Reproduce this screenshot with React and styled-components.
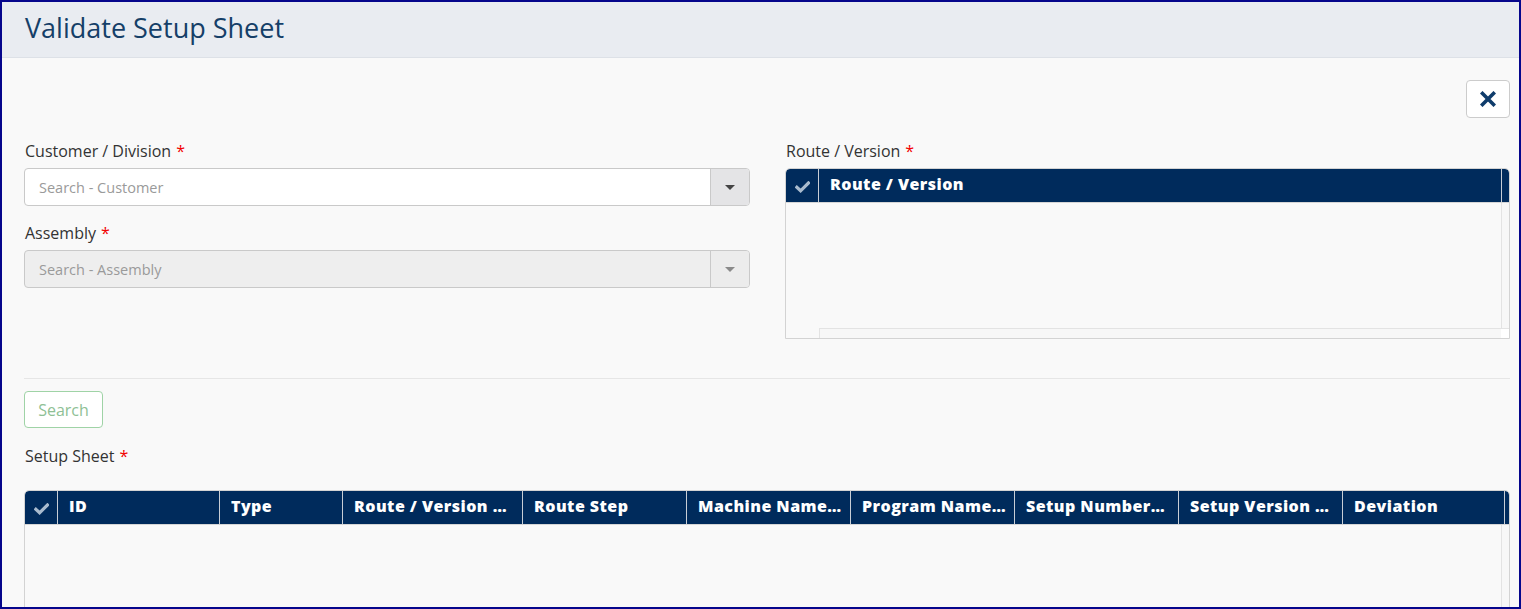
import React from "react";
import styled, { createGlobalStyle } from "styled-components";

const GlobalStyle = createGlobalStyle`
  * { box-sizing: border-box; }
  html, body { margin: 0; padding: 0; }
  body {
    font-family: "Open Sans", "Liberation Sans", sans-serif;
    background: #f9f9f9;
  }
`;

const Frame = styled.div`
  height: 609px;
  border: 2px solid #06068c;
  background: #f9f9f9;
  overflow: hidden;
  display: flex;
  flex-direction: column;
`;

const Header = styled.header`
  height: 56px;
  flex: none;
  background: #e9ecf1;
  border-bottom: 1px solid #dde1e7;
  display: flex;
  align-items: center;
  padding: 0 0 4px 23px;
`;

const Title = styled.h1`
  margin: 0;
  font-size: 27px;
  font-weight: 400;
  color: #153f68;
`;

const Body = styled.main`
  padding: 22px 9px 0 22px;
  display: flex;
  flex-direction: column;
`;

const CloseRow = styled.div`
  display: flex;
  justify-content: flex-end;
`;

const CloseButton = styled.button`
  width: 44px;
  height: 38px;
  background: #fff;
  border: 1px solid #ccc;
  border-radius: 4px;
  display: flex;
  align-items: center;
  justify-content: center;
  padding: 0;
`;

const FormGrid = styled.div`
  display: grid;
  grid-template-columns: 726px 1fr;
  column-gap: 35px;
  margin-top: 23px;
`;

const Column = styled.div`
  display: flex;
  flex-direction: column;
`;

const Label = styled.label`
  font-size: 16px;
  line-height: 21px;
  color: #333;
  margin-top: ${(p) => p.$top || 0}px;
  margin-bottom: 6px;
  margin-left: 1px;
`;

const Req = styled.span`
  color: #f20000;
  margin-left: 5px;
`;

const Select = styled.div`
  display: flex;
  height: 38px;
  border: 1px solid #c9c9c9;
  border-radius: 4px;
  background: ${(p) => (p.$disabled ? "#eeeeee" : "#fff")};
  overflow: hidden;
`;

const SelectInput = styled.div`
  flex: 1;
  display: flex;
  align-items: center;
  padding-left: 14px;
  font-size: 14.5px;
  color: #9a9a9a;
`;

const SelectAddon = styled.div`
  width: 39px;
  border-left: 1px solid #c9c9c9;
  background: ${(p) => (p.$disabled ? "#ececec" : "#e4e4e6")};
  display: flex;
  align-items: center;
  justify-content: center;
`;

const Caret = styled.span`
  width: 0;
  height: 0;
  border-left: 5px solid transparent;
  border-right: 5px solid transparent;
  border-top: 5px solid ${(p) => (p.$disabled ? "#8a8a8a" : "#444")};
`;

const Grid = styled.div`
  border: 1px solid #d3d3d3;
  border-radius: 5px 5px 0 0;
  height: ${(p) => p.$height}px;
  display: flex;
  flex-direction: column;
  overflow: hidden;
`;

const HeadRow = styled.div`
  display: flex;
  height: 34px;
  flex: none;
  background: #002b5c;
  border-radius: 4px 4px 0 0;
  border-bottom: 1px solid #d6d6d6;
`;

const HeadCell = styled.div`
  width: ${(p) => (p.$w ? `${p.$w}px` : "auto")};
  flex: ${(p) => (p.$w ? "none" : 1)};
  border-right: 1px solid #c8ced6;
  color: #fff;
  font-weight: 800;
  font-size: 16px;
  letter-spacing: 0.45px;
  padding: 0 8px 4px 11px;
  display: flex;
  align-items: center;
  white-space: nowrap;
  overflow: hidden;
  & > span {
    overflow: hidden;
    text-overflow: ellipsis;
  }
`;

const CheckCell = styled.div`
  width: 33px;
  flex: none;
  border-right: 1px solid #c8ced6;
  display: flex;
  align-items: center;
  justify-content: center;
  padding-top: 2px;
`;

const HeadSpacer = styled.div`
  flex: 1;
`;

const GridBody = styled.div`
  flex: 1;
  display: flex;
  flex-direction: column;
  background: #f9f9f9;
`;

const BodyMain = styled.div`
  flex: 1;
  display: flex;
`;

const Viewport = styled.div`
  flex: 1;
`;

const VScroll = styled.div`
  width: 8px;
  border-left: 1px solid #e3e3e3;
  background: #f7f7f7;
`;

const HScrollRow = styled.div`
  height: 10px;
  display: flex;
  flex: none;
`;

const HScrollGap = styled.div`
  width: 33px;
`;

const HScroll = styled.div`
  flex: 1;
  border-top: 1px solid #e3e3e3;
  border-left: 1px solid #e3e3e3;
  background: #f7f7f7;
`;

const ScrollCorner = styled.div`
  width: 8px;
  background: #fff;
  border-top: 1px solid #e3e3e3;
`;

const Divider = styled.hr`
  border: none;
  border-top: 1px solid #e6e6e6;
  margin: 39px 0 12px 0;
`;

const SearchButton = styled.button`
  align-self: flex-start;
  width: 79px;
  height: 37px;
  background: #fff;
  border: 1px solid #9fd3a6;
  border-radius: 4px;
  font-family: inherit;
  font-size: 16px;
  color: #8ebf95;
  padding: 0;
`;

const SectionLabel = styled(Label)`
  margin-top: 18px;
  margin-bottom: 23px;
`;

const Check = ({ color = "#a9bbce" }) => (
  <svg width="15" height="12" viewBox="0 0 15 12">
    <path d="M1.8 6.3 L5.6 9.8 L13.4 2" fill="none" stroke={color} strokeWidth="3.2" strokeLinecap="square" />
  </svg>
);

const CloseIcon = () => (
  <svg width="16" height="16" viewBox="0 0 16 16">
    <path d="M2.5 2.5 L13.5 13.5 M13.5 2.5 L2.5 13.5" stroke="#0f3c6b" strokeWidth="3.6" strokeLinecap="square" />
  </svg>
);

const SearchSelect = ({ placeholder, disabled }) => (
  <Select $disabled={disabled}>
    <SelectInput>{placeholder}</SelectInput>
    <SelectAddon $disabled={disabled}>
      <Caret $disabled={disabled} />
    </SelectAddon>
  </Select>
);

const setupColumns = [
  { title: "ID", w: 162 },
  { title: "Type", w: 123 },
  { title: "Route / Version Name", w: 180 },
  { title: "Route Step", w: 164 },
  { title: "Machine Name(s)", w: 164 },
  { title: "Program Name(s)", w: 164 },
  { title: "Setup Number(s)", w: 164 },
  { title: "Setup Version Name", w: 164 },
  { title: "Deviation", w: 162 },
];

const App = () => {
  return (
    <>
      <GlobalStyle />
      <Frame>
        <Header>
          <Title>Validate Setup Sheet</Title>
        </Header>
        <Body>
          <CloseRow>
            <CloseButton aria-label="Close">
              <CloseIcon />
            </CloseButton>
          </CloseRow>

          <FormGrid>
            <Column>
              <Label>
                Customer / Division<Req>*</Req>
              </Label>
              <SearchSelect placeholder="Search - Customer" />
              <Label $top={17}>
                Assembly<Req>*</Req>
              </Label>
              <SearchSelect placeholder="Search - Assembly" disabled />
            </Column>
            <Column>
              <Label>
                Route / Version<Req>*</Req>
              </Label>
              <Grid $height={171}>
                <HeadRow>
                  <CheckCell>
                    <Check />
                  </CheckCell>
                  <HeadCell $w={683}>
                    <span>Route / Version</span>
                  </HeadCell>
                  <HeadSpacer />
                </HeadRow>
                <GridBody>
                  <BodyMain>
                    <Viewport />
                    <VScroll />
                  </BodyMain>
                  <HScrollRow>
                    <HScrollGap />
                    <HScroll />
                    <ScrollCorner />
                  </HScrollRow>
                </GridBody>
              </Grid>
            </Column>
          </FormGrid>

          <Divider />
          <SearchButton>Search</SearchButton>
          <SectionLabel>
            Setup Sheet<Req>*</Req>
          </SectionLabel>

          <Grid $height={140}>
            <HeadRow>
              <CheckCell>
                <Check />
              </CheckCell>
              {setupColumns.map((c) => (
                <HeadCell key={c.title} $w={c.w}>
                  <span>{c.title}</span>
                </HeadCell>
              ))}
              <HeadSpacer />
            </HeadRow>
            <GridBody>
              <BodyMain>
                <Viewport />
                <VScroll />
              </BodyMain>
            </GridBody>
          </Grid>
        </Body>
      </Frame>
    </>
  );
};

export default App;
